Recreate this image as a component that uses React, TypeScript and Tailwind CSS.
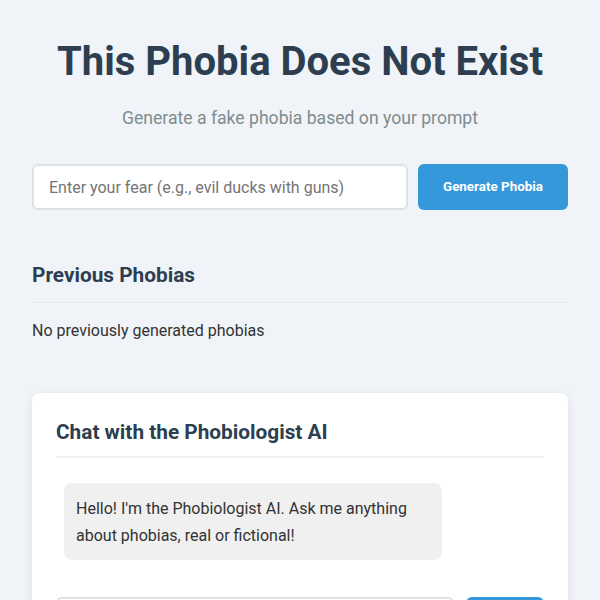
export default function App() {
  return (
    <div className="min-h-screen bg-[#f0f4f8] font-['Roboto',sans-serif] text-[#333]">
      <div className="mx-auto max-w-[600px] px-8 pt-[38px] pb-8">
        <h1 className="text-center text-[40px] font-bold leading-[1.2] text-[#2c3e50]">This Phobia Does Not Exist</h1>
        <p className="mt-[19px] text-center text-[17.6px] leading-[1.5] text-[#7f8c8d]">Generate a fake phobia based on your prompt</p>

        <div className="mt-[33px] flex gap-[10px]">
          <input
            className="h-[46px] flex-1 rounded-[6px] border-2 border-[#dde1e5] bg-white px-[15px] text-[16px] outline-none placeholder:text-[#757575]"
            placeholder="Enter your fear (e.g., evil ducks with guns)"
          />
          <button className="h-[46px] w-[150px] rounded-[6px] bg-[#3498db] text-[13.4px] font-bold text-white">Generate Phobia</button>
        </div>

        <div className="mt-[50px]">
          <h2 className="border-b border-[#e3e8ed] pb-[10px] text-[20.8px] font-bold text-[#2c3e50]">Previous Phobias</h2>
          <p className="mt-[16px] text-[16px] text-[#333]">No previously generated phobias</p>
        </div>

        <div className="mt-[50px] rounded-[8px] bg-white p-6 shadow-[0_2px_10px_rgba(0,0,0,0.08)]">
          <h2 className="border-b-2 border-[#eef0f2] pb-[8px] text-[20.8px] font-bold text-[#2c3e50]">Chat with the Phobiologist AI</h2>
          <div className="mt-[25px] px-2">
            <div className="max-w-[80%] rounded-[8px] bg-[#f0f0f0] px-[12px] pt-[12px] pb-[11px] text-[16px] leading-[1.7] text-[#333]">
              Hello! I'm the Phobiologist AI. Ask me anything about phobias, real or fictional!
            </div>
          </div>
          <div className="mt-[37px] flex gap-[12px]">
            <input
              className="h-[46px] flex-1 rounded-[6px] border-2 border-[#dde1e5] bg-white px-[15px] text-[16px] outline-none placeholder:text-[#757575]"
              placeholder="Ask about a phobia..."
            />
            <button className="h-[46px] w-[78px] rounded-[6px] bg-[#3498db] text-[13.4px] font-bold text-white">Send</button>
          </div>
        </div>
      </div>
    </div>
  );
}
